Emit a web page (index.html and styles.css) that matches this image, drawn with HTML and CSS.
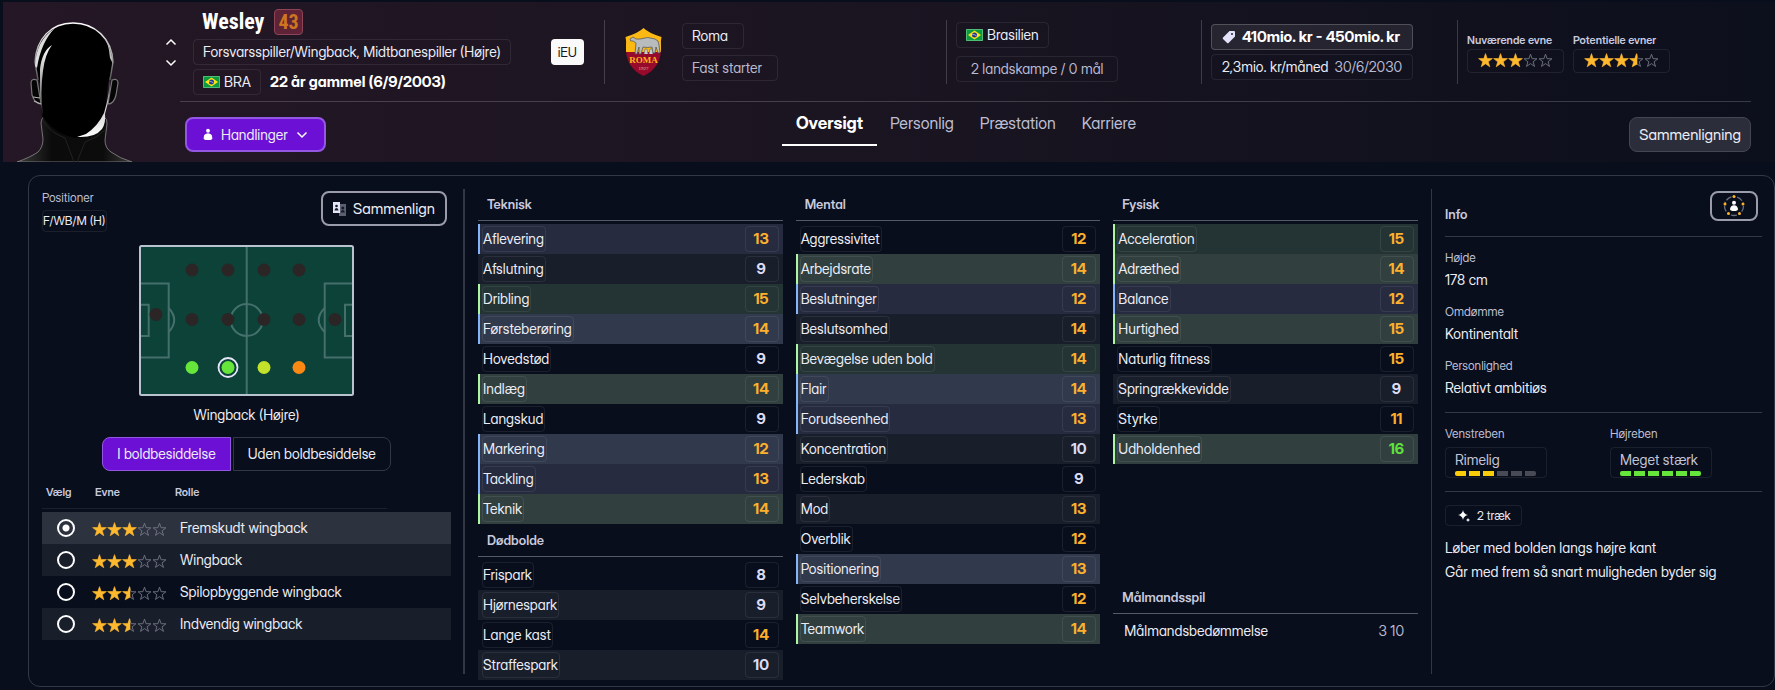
FILE: index.html
```html
<!DOCTYPE html>
<html lang="da">
<head>
    <meta charset="UTF-8">
    <meta name="viewport" content="width=device-width, initial-scale=1.0">
    <title>Wesley - Oversigt</title>
    <link rel="stylesheet" href="styles.css">
</head>
<body>
    <!-- Shared icons -->
    <svg class="sprite" aria-hidden="true">
        <symbol id="star-on" viewBox="0 0 15 15">
            <path fill="#ffb92e" stroke="#ffb92e" stroke-width=".6" d="M7.500 .6l1.700 4.900 5.200 .1-4.100 3.200 1.500 5-4.300-3-4.300 3 1.500-5-4.100-3.200 5.200-.1z"/>
        </symbol>
        <symbol id="star-off" viewBox="0 0 15 15">
            <path fill="none" stroke="#747786" stroke-width=".9" d="M7.500 1.200l1.600 4.500 4.800 .1-3.800 3 1.400 4.600-4-2.800-4 2.800 1.400-4.600-3.800-3 4.800-.1z"/>
        </symbol>
        <symbol id="star-half" viewBox="0 0 15 15">
            <path fill="none" stroke="#747786" stroke-width=".9" d="M7.500 1.200l1.600 4.500 4.800 .1-3.800 3 1.400 4.600-4-2.800"/>
            <path fill="#ffb92e" stroke="#ffb92e" stroke-width=".6" d="M8 1.500v9.700l-4.800 2.600 1.500-5L.6 5.600l5.200-.1L7.500 .6z"/>
        </symbol>
        <symbol id="flag-br" viewBox="0 0 17 12">
            <rect width="17" height="12" rx="1" fill="#0b9a3f"/>
            <path d="M.5 11.5v-11h16v11z" fill="none" stroke="#7fd39b" stroke-opacity=".6"/>
            <path d="M8.5 1.5L15 6l-6.5 4.500L2 6z" fill="#ffe11a"/>
            <circle cx="8.500" cy="6" r="2.500" fill="#233a8c"/>
            <path d="M6.200 5.400q2.500-.2 4.400 1.600" fill="none" stroke="#e8ecf5" stroke-width=".6"/>
        </symbol>
    </svg>

    <header class="player-header">
        <svg class="portrait" viewBox="0 0 115 140" aria-hidden="true">
            <defs>
                <linearGradient id="rim" x1="0" y1="0" x2="0" y2="1">
                    <stop offset="0" stop-color="#fff"/>
                    <stop offset=".5" stop-color="#b0b0b0"/>
                    <stop offset="1" stop-color="#555"/>
                </linearGradient>
                <linearGradient id="glow" x1="0" y1="0" x2="0" y2="1">
                    <stop offset="0" stop-color="#fff"/>
                    <stop offset=".4" stop-color="#bbb"/>
                    <stop offset="1" stop-color="#444"/>
                </linearGradient>
                <linearGradient id="jaw" x1="0" y1="0" x2="0" y2="1">
                    <stop offset="0" stop-color="#444"/>
                    <stop offset=".5" stop-color="#ccc"/>
                    <stop offset="1" stop-color="#fff"/>
                </linearGradient>
                <linearGradient id="coat" x1="0" y1="0" x2="1" y2="0">
                    <stop offset="0" stop-color="#3c3c3c"/>
                    <stop offset=".3" stop-color="#0b0b0b"/>
                    <stop offset=".75" stop-color="#0c0c0c"/>
                    <stop offset="1" stop-color="#3a3a3a"/>
                </linearGradient>
            </defs>
            <path d="M0 140q14-5 21-10 5-5 5-13l-2-16q0-5 4-7l58 0q5 3 4 8l-2 16q0 8 6 12 8 6 21 10z" fill="url(#coat)" stroke="#8a8a8a" stroke-width=".8"/>
            <path d="M20 58q-6-2-6 3l1 12q3 9 9 9z" fill="#050505" stroke="#777" stroke-width="1.200"/>
            <path d="M95 58q6-2 6 3l-2 12q-2 9-8 9z" fill="#050505" stroke="#777" stroke-width="1.200"/>
            <path d="M16 75l7 1M17 79l7 3" stroke="#b5b5b5" stroke-width="1.200"/>
            <path d="M56 1C34 1 19 17 18 40l5 22 2 32q14 20 36 22 21-3 27-24l3-30 5-22C95 17 78 1 56 1z" fill="#000"/>
            <path d="M21 58l-3-18C19 17 34 1 56 1s39 16 40 39l-3 18" fill="none" stroke="url(#rim)" stroke-width="1.400"/>
            <path d="M18 44Q19 18 38 6 24 20 20 46z" fill="#ddd"/>
            <path d="M35 23q-10 6-12 24l0 28 3 20q-3-26 0-46 2-17 9-26z" fill="url(#glow)"/>
            <path d="M84 10q10 12 12 32l-3-6Q92 20 84 10z" fill="#bbb"/>
            <path d="M93 52q0 20-6 39-6 13-18 21l-9 3q18 1 25-8 4-6 3-15 6-19 5-40z" fill="url(#jaw)"/>
            <path d="M26 99q8 12 22 17l9 24M88 108q-8 8-20 12l-8 20" fill="none" stroke="#222"/>
        </svg>
        <div class="stepper">
            <button aria-label="Forrige spiller"><svg viewBox="0 0 12 8"><path d="M1.500 6.500L6 2l4.500 4.500"/></svg></button>
            <button aria-label="Næste spiller"><svg viewBox="0 0 12 8"><path d="M1.500 1.500L6 6l4.500-4.500"/></svg></button>
        </div>

        <div class="header-main">
            <div class="summary">
                <div class="identity">
                    <div class="name-row">
                        <h1>Wesley</h1>
                        <span class="shirt">43</span>
                    </div>
                    <div class="line">
                        <span class="chip">Forsvarsspiller/Wingback, Midtbanespiller (Højre)</span>
                        <span class="tag-eu">iEU</span>
                    </div>
                    <div class="line">
                        <span class="chip"><svg class="flag"><use href="#flag-br"/></svg>BRA</span>
                        <strong>22 år gammel (6/9/2003)</strong>
                    </div>
                </div>

                <div class="block club">
                    <svg class="crest" viewBox="0 0 39 50" aria-hidden="true">
                        <clipPath id="shield"><path d="M19.500 1q5 5 18 9-1 4-.5 9c1 14-6 25-17.500 30C8 44 1 33 2 19q.5-5-.5-9 13-4 18-9z"/></clipPath>
                        <g clip-path="url(#shield)">
                            <rect width="39" height="25" fill="#fdb913"/>
                            <rect y="25" width="39" height="25" fill="#970a2c"/>
                        </g>
                        <path d="M6 12l3-2 3 2h4q8-3 15 0 4 1 4 6l1 8h-2l-2-6-1 6h-2l-1-6q-5 1-9 0l-2 7h-2l0-7-2 7h-2l1-11-3-2q-3 1-3-2z" fill="#b9bcbd" stroke="#4a4d50" stroke-width=".7"/>
                        <path d="M20 27l1-5h2l1 5M25 27l1-5h2l1 5" fill="#c9cccc" stroke="#55585a" stroke-width=".5"/>
                        <text x="19.500" y="35.500" text-anchor="middle" class="crest-name">ROMA</text>
                        <text x="19.500" y="43" text-anchor="middle" class="crest-year">1927</text>
                    </svg>
                    <div class="stack">
                        <span class="chip">Roma</span>
                        <span class="chip muted">Fast starter</span>
                    </div>
                </div>

                <div class="block nation">
                    <div class="stack">
                        <span class="chip"><svg class="flag"><use href="#flag-br"/></svg>Brasilien</span>
                        <span class="chip muted caps">2 landskampe / 0 mål</span>
                    </div>
                </div>

                <div class="block contract">
                    <div class="stack">
                        <span class="chip value">
                            <svg viewBox="0 0 14 14" class="icon"><path fill="#e4e2fb" fill-rule="evenodd" d="M7.500 1H12q1 0 1 1v4.500L6.500 13q-.7.700-1.400 0L1 8.900q-.7-.7 0-1.400zM10 3a1 1 0 100 2 1 1 0 000-2z"/></svg>
                            410mio. kr - 450mio. kr
                        </span>
                        <span class="chip wage">2,3mio. kr/måned <span class="muted">30/6/2030</span></span>
                    </div>
                </div>

                <div class="block ability">
                    <div>
                        <h2>Nuværende evne</h2>
                        <span class="chip rating"><svg><use href="#star-on"/></svg><svg><use href="#star-on"/></svg><svg><use href="#star-on"/></svg><svg><use href="#star-off"/></svg><svg><use href="#star-off"/></svg></span>
                    </div>
                    <div>
                        <h2>Potentielle evner</h2>
                        <span class="chip rating"><svg><use href="#star-on"/></svg><svg><use href="#star-on"/></svg><svg><use href="#star-on"/></svg><svg><use href="#star-half"/></svg><svg><use href="#star-off"/></svg></span>
                    </div>
                </div>
            </div>

            <div class="toolbar">
                <button class="btn btn-primary">
                    <svg viewBox="0 0 12 14" class="person"><circle cx="6" cy="2.500" r="2.300" fill="#fff"/><path fill="#fff" d="M1 10q0-4 5-4.500Q11 6 11 10q1 3-2 3.500H3Q0 13 1 10z"/></svg>
                    Handlinger
                    <svg viewBox="0 0 12 8" class="chevron"><path d="M1.500 1.500L6 6l4.500-4.500"/></svg>
                </button>
                <nav class="tabs">
                    <a href="#oversigt" class="active">Oversigt</a>
                    <a href="#personlig">Personlig</a>
                    <a href="#praestation">Præstation</a>
                    <a href="#karriere">Karriere</a>
                </nav>
                <button class="btn btn-secondary">Sammenligning</button>
            </div>
        </div>
    </header>

    <main class="panel">
        <section class="positions">
            <div class="positions-top">
                <div>
                    <div class="label">Positioner</div>
                    <span class="chip pos-chip">F/WB/M (H)</span>
                </div>
                <button class="btn btn-outline">
                    <svg viewBox="0 0 14 14" class="icon">
                        <path fill="#5b6070" d="M6 2h7v12H6z"/><circle cx="9.800" cy="6" r="1.500" fill="#151a28"/><path fill="#151a28" d="M7.800 10.500q0-2.500 2-2.500t2 2.500z"/>
                        <path fill="#e6e6fa" d="M0 0h7v11H0z"/><circle cx="3.500" cy="4" r="1.300" fill="#151a28"/><path fill="#151a28" d="M1.500 8.500q0-2.500 2-2.500t2 2.500z"/>
                    </svg>
                    Sammenlign
                </button>
            </div>

            <svg class="pitch" viewBox="0 0 215 151" role="img" aria-label="Positioner på banen">
                <rect x="1" y="1" width="213" height="149" rx="1.500" fill="#0c4238" stroke="#b9c3cf" stroke-width="2"/>
                <g fill="none" stroke="#456f6b" stroke-width="2">
                    <path d="M107.700 2v147M2 38.500h27.700v74H2M2 59.700h7.700V91H2M213 38.500h-27.300v74H213M213 59.700h-7V91h7"/>
                    <circle cx="107.700" cy="75" r="16"/>
                    <path d="M29.700 63q11 12 0 24M185.700 63q-12 12 0 24"/>
                </g>
                <g fill="#2b2526">
                    <circle cx="53" cy="25" r="6.500"/><circle cx="89" cy="25" r="6.500"/><circle cx="125" cy="25" r="6.500"/><circle cx="160" cy="25" r="6.500"/>
                    <circle cx="17" cy="69.500" r="6.500"/><circle cx="53" cy="74.500" r="6.500"/><circle cx="89" cy="74.500" r="6.500"/><circle cx="125" cy="74.500" r="6.500"/><circle cx="160" cy="74.500" r="6.500"/><circle cx="196" cy="74.500" r="6.500"/>
                </g>
                <circle cx="53" cy="122.500" r="6.500" fill="#66e63a"/>
                <circle cx="89" cy="122.500" r="9.500" fill="none" stroke="#e6e6fa" stroke-width="1.800"/>
                <circle cx="89" cy="122.500" r="6.500" fill="#66e63a"/>
                <circle cx="125" cy="122.500" r="6.500" fill="#c3e12a"/>
                <circle cx="160" cy="122.500" r="6.500" fill="#fb8812"/>
            </svg>
            <p class="pitch-label">Wingback (Højre)</p>

            <div class="segments">
                <button class="selected">I boldbesiddelse</button>
                <button>Uden boldbesiddelse</button>
            </div>

            <table class="roles">
                <thead>
                    <tr><th>Vælg</th><th>Evne</th><th>Rolle</th><th class="end"></th></tr>
                </thead>
                <tbody>
                    <tr class="chosen">
                        <td><input type="radio" name="role" id="role1" checked></td>
                        <td><span class="rating"><svg><use href="#star-on"/></svg><svg><use href="#star-on"/></svg><svg><use href="#star-on"/></svg><svg><use href="#star-off"/></svg><svg><use href="#star-off"/></svg></span></td>
                        <td colspan="2"><label for="role1">Fremskudt wingback</label></td>
                    </tr>
                    <tr>
                        <td><input type="radio" name="role" id="role2"></td>
                        <td><span class="rating"><svg><use href="#star-on"/></svg><svg><use href="#star-on"/></svg><svg><use href="#star-on"/></svg><svg><use href="#star-off"/></svg><svg><use href="#star-off"/></svg></span></td>
                        <td colspan="2"><label for="role2">Wingback</label></td>
                    </tr>
                    <tr>
                        <td><input type="radio" name="role" id="role3"></td>
                        <td><span class="rating"><svg><use href="#star-on"/></svg><svg><use href="#star-on"/></svg><svg><use href="#star-half"/></svg><svg><use href="#star-off"/></svg><svg><use href="#star-off"/></svg></span></td>
                        <td colspan="2"><label for="role3">Spilopbyggende wingback</label></td>
                    </tr>
                    <tr>
                        <td><input type="radio" name="role" id="role4"></td>
                        <td><span class="rating"><svg><use href="#star-on"/></svg><svg><use href="#star-on"/></svg><svg><use href="#star-half"/></svg><svg><use href="#star-off"/></svg><svg><use href="#star-off"/></svg></span></td>
                        <td colspan="2"><label for="role4">Indvendig wingback</label></td>
                    </tr>
                </tbody>
            </table>
        </section>

        <div class="divider thick"></div>

        <section class="attributes">
            <div class="column">
                <h2>Teknisk</h2>
                <table class="attrs">
                    <tr class="blue"><th><span>Aflevering</span></th><td><b class="good">13</b></td></tr>
                    <tr><th><span>Afslutning</span></th><td><b>9</b></td></tr>
                    <tr class="green"><th><span>Dribling</span></th><td><b class="good">15</b></td></tr>
                    <tr class="blue"><th><span>Førsteberøring</span></th><td><b class="good">14</b></td></tr>
                    <tr><th><span>Hovedstød</span></th><td><b>9</b></td></tr>
                    <tr class="green"><th><span>Indlæg</span></th><td><b class="good">14</b></td></tr>
                    <tr><th><span>Langskud</span></th><td><b>9</b></td></tr>
                    <tr class="blue"><th><span>Markering</span></th><td><b class="good">12</b></td></tr>
                    <tr class="blue"><th><span>Tackling</span></th><td><b class="good">13</b></td></tr>
                    <tr class="green"><th><span>Teknik</span></th><td><b class="good">14</b></td></tr>
                </table>
                <h2>Dødbolde</h2>
                <table class="attrs">
                    <tr><th><span>Frispark</span></th><td><b>8</b></td></tr>
                    <tr><th><span>Hjørnespark</span></th><td><b>9</b></td></tr>
                    <tr><th><span>Lange kast</span></th><td><b class="good">14</b></td></tr>
                    <tr><th><span>Straffespark</span></th><td><b>10</b></td></tr>
                </table>
            </div>

            <div class="column">
                <h2>Mental</h2>
                <table class="attrs">
                    <tr><th><span>Aggressivitet</span></th><td><b class="good">12</b></td></tr>
                    <tr class="green"><th><span>Arbejdsrate</span></th><td><b class="good">14</b></td></tr>
                    <tr class="blue"><th><span>Beslutninger</span></th><td><b class="good">12</b></td></tr>
                    <tr><th><span>Beslutsomhed</span></th><td><b class="good">14</b></td></tr>
                    <tr class="green"><th><span>Bevægelse uden bold</span></th><td><b class="good">14</b></td></tr>
                    <tr class="blue"><th><span>Flair</span></th><td><b class="good">14</b></td></tr>
                    <tr class="blue"><th><span>Forudseenhed</span></th><td><b class="good">13</b></td></tr>
                    <tr><th><span>Koncentration</span></th><td><b>10</b></td></tr>
                    <tr><th><span>Lederskab</span></th><td><b>9</b></td></tr>
                    <tr><th><span>Mod</span></th><td><b class="good">13</b></td></tr>
                    <tr><th><span>Overblik</span></th><td><b class="good">12</b></td></tr>
                    <tr class="blue"><th><span>Positionering</span></th><td><b class="good">13</b></td></tr>
                    <tr><th><span>Selvbeherskelse</span></th><td><b class="good">12</b></td></tr>
                    <tr class="green"><th><span>Teamwork</span></th><td><b class="good">14</b></td></tr>
                </table>
            </div>

            <div class="column">
                <h2>Fysisk</h2>
                <table class="attrs">
                    <tr class="green"><th><span>Acceleration</span></th><td><b class="good">15</b></td></tr>
                    <tr class="green"><th><span>Adræthed</span></th><td><b class="good">14</b></td></tr>
                    <tr class="blue"><th><span>Balance</span></th><td><b class="good">12</b></td></tr>
                    <tr class="green"><th><span>Hurtighed</span></th><td><b class="good">15</b></td></tr>
                    <tr><th><span>Naturlig fitness</span></th><td><b class="good">15</b></td></tr>
                    <tr><th><span>Springrækkevidde</span></th><td><b>9</b></td></tr>
                    <tr><th><span>Styrke</span></th><td><b class="good">11</b></td></tr>
                    <tr class="green"><th><span>Udholdenhed</span></th><td><b class="great">16</b></td></tr>
                </table>
                <div class="keeper">
                    <h2>Målmandsspil</h2>
                    <div class="keeper-row"><span>Målmandsbedømmelse</span><span class="muted">3 10</span></div>
                </div>
            </div>
        </section>

        <div class="divider"></div>

        <section class="info">
            <div class="info-top">
                <h2>Info</h2>
                <button class="btn btn-outline btn-icon" aria-label="Spillerprofil">
                    <svg viewBox="0 0 22 22">
                        <circle cx="11" cy="11" r="9.500" fill="none" stroke="#6b7080" stroke-width="1.300" stroke-dasharray="6 2 2 1.940"/>
                        <g fill="#fbb02c"><circle cx="11" cy="1.600" r="1.500"/><circle cx="20" cy="9" r="1.500"/><circle cx="16.500" cy="18.500" r="1.500"/><circle cx="5.500" cy="18.500" r="1.500"/><circle cx="2" cy="9" r="1.500"/></g>
                        <circle cx="11" cy="7.800" r="2" fill="#fff"/>
                        <path fill="#fff" d="M7 14q.5-3.500 4-3.700 3.500.2 4 3.700 0 2-4 2t-4-2z"/>
                    </svg>
                </button>
            </div>
            <dl>
                <dt>Højde</dt><dd>178 cm</dd>
                <dt>Omdømme</dt><dd>Kontinentalt</dd>
                <dt>Personlighed</dt><dd>Relativt ambitiøs</dd>
            </dl>
            <div class="feet">
                <div>
                    <div class="label">Venstreben</div>
                    <div class="foot fair">Rimelig<div class="bar"><i class="on"></i><i class="on"></i><i class="on"></i><i></i><i></i><i></i></div></div>
                </div>
                <div>
                    <div class="label">Højreben</div>
                    <div class="foot strong">Meget stærk<div class="bar"><i class="on"></i><i class="on"></i><i class="on"></i><i class="on"></i><i class="on"></i><i class="on"></i></div></div>
                </div>
            </div>
            <span class="chip traits">
                <svg viewBox="0 0 12 12" class="spark"><path fill="#fff" d="M5 0q.7 4.200 5 5-4.300.8-5 5-.7-4.200-5-5 4.300-.8 5-5zM10 8q.3 1.600 2 2-1.700.4-2 2-.3-1.600-2-2 1.700-.4 2-2z"/></svg>
                2 træk
            </span>
            <ul>
                <li>Løber med bolden langs højre kant</li>
                <li>Går med frem så snart muligheden byder sig</li>
            </ul>
        </section>
    </main>
</body>
</html>
```
FILE: styles.css
```css
* {
    box-sizing: border-box;
}

body {
    margin: 0;
    padding: 2px 0 2px 3px;
    background: #080e1b;
    color: #ececf4;
    font-family: "Inter Display", Inter, "Liberation Sans", sans-serif;
    font-feature-settings: "cv11";
    font-variation-settings: "opsz" 32;
    font-size: 14px;
    line-height: 20px;
}

h1, h2, p, dl, dd, ul {
    margin: 0;
    padding: 0;
}

ul {
    list-style: none;
}

button {
    font: inherit;
    font-feature-settings: inherit;
    font-variation-settings: inherit;
    color: inherit;
    cursor: pointer;
}

.sprite {
    position: absolute;
    width: 0;
    height: 0;
}

.muted {
    color: #b9b9d0;
}

.label {
    font-size: 12px;
    color: #bdbdd2;
}

.icon {
    width: 14px;
    height: 14px;
}

.chip {
    display: inline-flex;
    align-items: center;
    height: 26px;
    padding: 0 9px;
    border: 1px solid #ffffff14;
    border-radius: 4px;
    white-space: nowrap;
}

.flag {
    width: 17px;
    height: 12px;
    margin-right: 4px;
}

.rating {
    display: inline-flex;
}

.rating svg {
    width: 15px;
    height: 15px;
}

/* Header */
.player-header {
    display: flex;
    padding: 0 24px 0 14px;
    background: linear-gradient(90deg, #251725, #1b1521 45%, #0c0f1c);
}

.portrait {
    width: 115px;
    height: 140px;
    align-self: flex-end;
}

.stepper {
    display: flex;
    flex-direction: column;
    gap: 13px;
    width: 48px;
    padding: 36px 0 0 33px;
}

.stepper button {
    display: flex;
    padding: 0;
    border: 0;
    background: none;
}

.stepper svg,
.chevron {
    width: 12px;
    height: 8px;
    fill: none;
    stroke: #fff;
    stroke-width: 1.5;
}

.header-main {
    flex: 1;
    min-width: 0;
}

.summary {
    display: grid;
    grid-template-columns: 424fr 342fr 255fr 256fr 294fr;
    align-items: start;
    height: 100px;
    border-bottom: 1px solid #ffffff2e;
}

.identity {
    padding: 6px 20px 0 13px;
}

.name-row {
    display: flex;
    align-items: center;
    gap: 10px;
    height: 28px;
    padding-left: 9px;
}

h1 {
    font-family: "Roboto Condensed", "Liberation Sans Narrow", Roboto, sans-serif;
    font-size: 22px;
    line-height: 28px;
    color: #fff;
}

.shirt {
    padding: 0 3px;
    border: 1px solid #8d4457;
    border-radius: 4px;
    background: #5e2336;
    color: #cf7520;
    font: bold 20px/24px "Roboto Condensed", "Liberation Sans Narrow", Roboto, sans-serif;
}

.line {
    display: flex;
    justify-content: space-between;
    align-items: center;
    margin-top: 3px;
}

.line + .line {
    justify-content: flex-start;
    gap: 9px;
    margin-top: 4px;
}

.line strong {
    font-size: 15px;
    font-weight: 700;
    color: #fff;
}

.tag-eu {
    padding: 0 7px;
    border-radius: 4px;
    background: #fafafa;
    color: #15151c;
    font-size: 13px;
    line-height: 26px;
}

.block {
    display: flex;
    align-items: center;
    height: 64px;
    margin-top: 18px;
    padding-left: 9px;
    border-left: 1px solid #ffffff2e;
}

.stack {
    display: flex;
    flex-direction: column;
    align-items: flex-start;
    gap: 6px;
}

.club {
    gap: 19px;
    padding-left: 19px;
}

.club .chip {
    padding-right: 15px;
}

.crest {
    width: 39px;
    height: 50px;
}

.crest-name {
    font: bold 9px "Liberation Serif", serif;
    fill: #fdb913;
}

.crest-year {
    font: 5px "Liberation Serif", serif;
    fill: #e0b9a0;
}

.nation .stack {
    gap: 8px;
}

.nation .caps {
    padding: 0 14px;
}

.contract .stack {
    align-items: stretch;
    gap: 4px;
}

.contract .chip {
    gap: 6px;
    padding: 0 10px;
}

.contract .value {
    border-color: #ffffff33;
    background: #ffffff14;
    color: #fff;
    font-size: 15px;
    font-weight: 700;
}

.ability {
    gap: 9px;
}

.ability h2 {
    font-size: 11px;
    font-weight: 600;
    line-height: 18px;
    color: #c9c9de;
}

.ability .chip {
    height: 24px;
    padding: 0 10px;
}

.toolbar {
    display: grid;
    grid-template-columns: 1fr auto 1fr;
    align-items: start;
    height: 60px;
}

.btn {
    display: inline-flex;
    align-items: center;
    justify-content: center;
    height: 35px;
    border-radius: 8px;
}

.btn-primary {
    justify-self: start;
    gap: 8px;
    margin: 15px 0 0 5px;
    padding: 0 16px;
    border: 2px solid #9457e4;
    background: #6d10d6;
}

.person {
    width: 10px;
    height: 13px;
}

.btn-secondary {
    justify-self: end;
    margin-top: 15px;
    padding: 0 9px;
    border: 1px solid #454654;
    background: #2c2d3b;
    font-size: 15px;
}

.tabs {
    display: flex;
}

.tabs a {
    padding: 11px 13px;
    border-bottom: 2px solid transparent;
    color: #bdbdd2;
    font-size: 16px;
    text-decoration: none;
}

.tabs .active {
    padding: 11px 14px;
    border-color: #fff;
    color: #fff;
    font-size: 17px;
    font-weight: 700;
}

/* Panel */
.panel {
    display: flex;
    margin: 13px 0 0 25px;
    padding: 13px 12px 6px 13px;
    border: 1px solid #333846;
    border-radius: 12px;
}

.divider {
    flex: none;
    width: 1px;
    margin: 0 13px 6px;
    background: #333846;
}

.divider.thick {
    width: 2px;
    margin-left: 12px;
}

.panel h2 {
    font-size: 13px;
    font-weight: 600;
    color: #c9c9de;
}

/* Positions */
.positions {
    flex: 409 1 0;
    display: flex;
    flex-direction: column;
    min-width: 0;
}

.positions-top {
    display: flex;
    justify-content: space-between;
    align-items: flex-start;
}

.positions-top .label {
    line-height: 18px;
    margin-bottom: 3px;
}

.pos-chip {
    height: 22px;
    padding: 0 1px 0 0;
    font-size: 12px;
}

.btn-outline {
    gap: 6px;
    margin: 2px 4px 0 0;
    padding: 0 10px;
    border: 2px solid #9a9cab;
    background: none;
    font-size: 15px;
}

.pitch {
    width: 215px;
    height: 151px;
    margin: 13px auto 0;
}

.pitch-label {
    margin-top: 9px;
    text-align: center;
}

.segments {
    display: flex;
    justify-content: center;
    gap: 2px;
    margin-top: 12px;
}

.segments button {
    height: 34px;
    padding: 0 14px;
    border: 1px solid #333846;
    border-radius: 0 8px 8px 0;
    background: none;
}

.segments .selected {
    border-color: #9457e4;
    border-radius: 8px 0 0 8px;
    background: #6d10d6;
}

.roles {
    width: 100%;
    margin-top: 6px;
    border-spacing: 0;
    table-layout: fixed;
}

.roles th {
    height: 32px;
    padding: 0 4px 2px;
    border-bottom: 1px solid #1b202d;
    color: #c9c9de;
    font-size: 11px;
    font-weight: 600;
    text-align: left;
}

.roles th:nth-child(1) {
    width: 49px;
}

.roles th:nth-child(2) {
    width: 80px;
}

.roles .end {
    width: 64px;
    border: 0;
}

.roles tbody::before {
    content: "";
    display: table-row;
    height: 3px;
}

.roles td {
    height: 32px;
    padding: 0 0 0 9px;
}

.roles td:nth-child(1) {
    padding-left: 15px;
}

.roles td:nth-child(2) {
    padding-left: 1px;
}

.roles tr:nth-child(even) td {
    background: #191e2b;
}

.roles .chosen td {
    background: #2d323f;
}

.roles .rating {
    vertical-align: middle;
}

.roles input {
    appearance: none;
    display: block;
    width: 18px;
    height: 18px;
    margin: 0;
    border: 2px solid #fff;
    border-radius: 50%;
}

.roles input:checked {
    background: radial-gradient(circle, #fff 3px, transparent 4px);
}

/* Attributes */
.attributes {
    flex: 940 1 0;
    display: grid;
    grid-template-columns: repeat(3, 1fr);
    gap: 13px;
}

.column {
    display: flex;
    flex-direction: column;
}

.column h2 {
    margin-bottom: 3px;
    padding-left: 9px;
    border-bottom: 1px solid #555a67;
    line-height: 31px;
}

.column .attrs + h2 {
    margin-top: 1px;
}

.attrs {
    width: 100%;
    border-collapse: collapse;
}

.attrs tr:nth-child(even) {
    background: #191e2b;
}

.attrs .blue {
    background: #262b40;
}

.attrs .blue:nth-child(even) {
    background: #31394c;
}

.attrs .green {
    background: #243333;
}

.attrs .green:nth-child(even) {
    background: #31403f;
}

.attrs th,
.attrs td {
    height: 30px;
    padding: 0 4px;
}

.attrs th {
    font-weight: normal;
    text-align: left;
}

.attrs .blue th {
    box-shadow: inset 2px 0 #85b4fb;
}

.attrs .green th {
    box-shadow: inset 2px 0 #adf7a4;
}

.attrs span,
.attrs b {
    display: block;
    width: fit-content;
    padding-right: 1px;
    border: 1px solid #ffffff14;
    border-radius: 4px;
    line-height: 24px;
}

.attrs b {
    width: 34px;
    margin-left: auto;
    color: #dcdcf5;
    font-size: 15px;
    font-weight: 700;
    text-align: center;
}

.attrs .good {
    color: #fcb02c;
}

.attrs .great {
    color: #5fe03c;
}

.keeper {
    margin: auto 0 35px;
}

.keeper-row {
    display: flex;
    justify-content: space-between;
    padding: 0 14px 0 11px;
    line-height: 28px;
}

/* Info */
.info {
    flex: 317 1 0;
    min-width: 0;
}

.info-top {
    display: flex;
    justify-content: space-between;
    align-items: flex-start;
    height: 48px;
    border-bottom: 1px solid #333846;
}

.info-top h2 {
    padding-top: 15px;
}

.btn-icon {
    width: 48px;
    height: 30px;
    padding: 0;
}

.btn-icon svg {
    width: 22px;
    height: 22px;
}

dl {
    padding: 11px 0 14px;
}

dt {
    font-size: 12px;
    color: #bdbdd2;
}

dd {
    margin-top: 2px;
}

dd + dt {
    margin-top: 12px;
}

.feet {
    display: grid;
    grid-template-columns: 1fr 1fr;
    gap: 13px;
    padding: 11px 0 13px;
    border: solid #333846;
    border-width: 1px 0;
}

.foot {
    width: fit-content;
    min-width: 102px;
    margin-top: 3px;
    padding: 0 9px 1px;
    border: 1px solid #ffffff14;
    border-radius: 4px;
    color: #c3c3d8;
    line-height: 23px;
}

.bar {
    display: flex;
    gap: 3px;
}

.bar i {
    width: 11px;
    height: 5px;
    background: #484b56;
}

.bar i:first-child {
    border-radius: 2px 0 0 2px;
}

.bar i:last-child {
    border-radius: 0 2px 2px 0;
}

.fair .on {
    background: #fbcc08;
}

.strong .on {
    background: #66e63a;
}

.traits {
    gap: 7px;
    height: 21px;
    margin-top: 13px;
    padding: 0 10px 0 12px;
    font-size: 12px;
}

.spark {
    width: 12px;
    height: 12px;
}

.info ul {
    margin-top: 9px;
    line-height: 24px;
}
```
